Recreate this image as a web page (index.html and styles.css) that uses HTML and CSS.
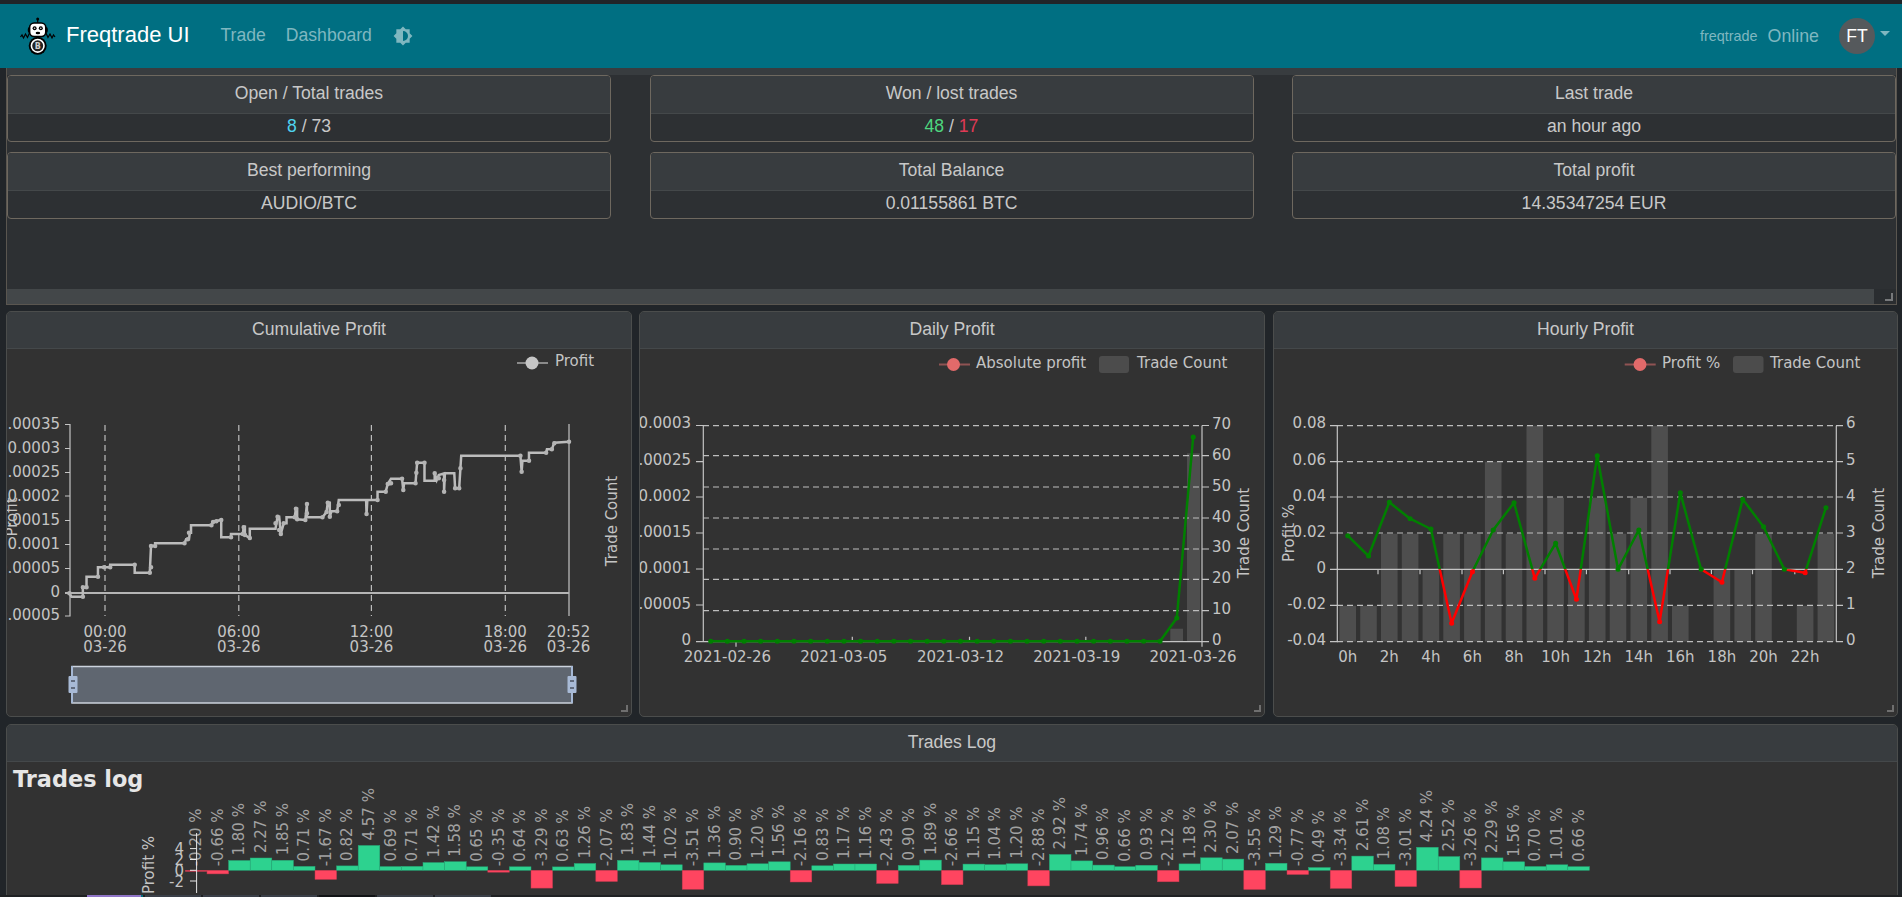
FILE: index.html
```html
<!DOCTYPE html>
<html lang="en">
<head>
<meta charset="utf-8">
<title>Freqtrade UI</title>
<link rel="stylesheet" href="styles.css">
</head>
<body>
<header class="navbar">
  <a class="brand">
    <svg class="logo" viewBox="0 0 40 40" width="40" height="40">
      <path class="logo-wire" d="M11.500 17l-2 4.500-2-3.500-2 4-1.500-3-1.500 2M28 17l2 4.500 2-3.500 2 4 1.500-3 1.500 2"/>
      <path class="logo-wire" d="M19.700 3v5"/>
      <circle class="logo-black" cx="19.700" cy="3" r="1.500"/>
      <rect class="logo-black" x="9.800" y="11" width="20" height="6" rx="2"/>
      <rect class="logo-head" x="11.600" y="7" width="16.200" height="13.500" rx="4.500"/>
      <circle class="logo-black" cx="16.600" cy="12.300" r="2"/>
      <circle class="logo-black" cx="22.800" cy="12.300" r="2"/>
      <circle class="logo-pupil" cx="16.600" cy="12.300" r=".800"/>
      <circle class="logo-pupil" cx="22.800" cy="12.300" r=".800"/>
      <ellipse class="logo-black" cx="19.900" cy="17" rx="2.300" ry="1.300"/>
      <circle class="logo-black" cx="19.700" cy="29.800" r="9"/>
      <circle class="logo-ring" cx="19.700" cy="29.800" r="6.300"/>
      <text class="logo-b" x="19.700" y="32.600">B</text>
    </svg>
    <span class="brand-name">Freqtrade UI</span>
  </a>
  <nav class="nav-links">
    <a class="nav-link">Trade</a>
    <a class="nav-link">Dashboard</a>
    <svg class="theme-icon" viewBox="0 0 24 24" width="20" height="20"><path d="M12,18V6A6,6 0 0,1 18,12A6,6 0 0,1 12,18M20,15.31L23.31,12L20,8.690V4H15.310L12,0.690L8.690,4H4V8.690L0.690,12L4,15.310V20H8.690L12,23.310L15.310,20H20V15.310Z"/></svg>
  </nav>
  <div class="nav-right">
    <span class="bot-name">freqtrade</span>
    <span class="bot-state">Online</span>
    <span class="avatar">FT</span>
    <span class="caret"></span>
  </div>
</header>

<main class="board">
  <section class="overview">
    <div class="overview-strip"></div>
    <div class="stat-grid">
      <div class="stat"><div class="stat-title">Open / Total trades</div><div class="stat-value"><span class="c-info">8</span> / 73</div></div>
      <div class="stat"><div class="stat-title">Won / lost trades</div><div class="stat-value"><span class="c-win">48</span> / <span class="c-loss">17</span></div></div>
      <div class="stat"><div class="stat-title">Last trade</div><div class="stat-value">an hour ago</div></div>
      <div class="stat"><div class="stat-title">Best performing</div><div class="stat-value">AUDIO/BTC</div></div>
      <div class="stat"><div class="stat-title">Total Balance</div><div class="stat-value">0.01155861 BTC</div></div>
      <div class="stat"><div class="stat-title">Total profit</div><div class="stat-value">14.35347254 EUR</div></div>
    </div>
    <div class="overview-band"><span class="band-handle"></span></div>
  </section>

  <section class="chart-row">
    <article class="panel">
      <h2 class="panel-title">Cumulative Profit</h2>
      <svg class="chart" viewBox="7 349 624 367" width="624" height="367">
        <line class="legend-line-grey" x1="517" y1="363" x2="548" y2="363"/>
        <circle class="legend-dot-grey" cx="532" cy="363" r="6.500"/>
        <text class="ct" x="555" y="366">Profit</text>

        <g class="dash">
          <line x1="105" y1="425" x2="105" y2="616"/>
          <line x1="238.800" y1="425" x2="238.800" y2="616"/>
          <line x1="371.400" y1="425" x2="371.400" y2="616"/>
          <line x1="505.300" y1="425" x2="505.300" y2="616"/>
        </g>
        <g class="axis">
          <path d="M65 424.500H70V616H65M65 448.500H70M65 472.500H70M65 496H70M65 520.500H70M65 544.500H70M65 568.500H70M569 424V616"/>
          <path class="axis-thick" d="M65 593H569"/>
        </g>
        <g class="ct end">
          <text x="60" y="429">0.00035</text>
          <text x="60" y="453">0.0003</text>
          <text x="60" y="477">0.00025</text>
          <text x="60" y="501">0.0002</text>
          <text x="60" y="525">0.00015</text>
          <text x="60" y="549">0.0001</text>
          <text x="60" y="573">0.00005</text>
          <text x="60" y="597">0</text>
          <text x="60" y="620">-0.00005</text>
        </g>
        <g class="ct mid">
          <text x="105" y="637">00:00</text><text x="105" y="652">03-26</text>
          <text x="238.800" y="637">06:00</text><text x="238.800" y="652">03-26</text>
          <text x="371.400" y="637">12:00</text><text x="371.400" y="652">03-26</text>
          <text x="505.300" y="637">18:00</text><text x="505.300" y="652">03-26</text>
          <text x="568.600" y="637">20:52</text><text x="568.600" y="652">03-26</text>
        </g>
        <text class="ct mid" transform="translate(17 517) rotate(-90)">Profit</text>
        <text class="ct mid" transform="translate(617 521) rotate(-90)">Trade Count</text>

        <g transform="translate(0 310) scale(.40816 .33333)">
          <path class="cum-line" d="M170 850L175 860 203 860 203 832 212 832 212 800 240 800 240 772 270 772 270 764 330 764 330 788 367 788 370 708 380 708 380 700 452 700 456 688 463 688 465 668 468 668 468 646 518 646 522 636 540 630 542 630 542 682 566 682 566 672 595 672 597 650 600 650 600 675 612 684 612 656 675 656 680 620 684 620 688 672 695 640 702 640 702 622 722 622 725 596 728 596 728 628 748 630 752 582 752 622 790 622 800 606 803 578 808 578 808 620 812 604 826 604 830 570 897 570 898 612 900 570 925 570 925 545 945 545 950 522 958 506 985 506 988 540 990 520 1018 520 1020 488 1022 458 1040 458 1040 512 1065 512 1065 490 1070 510 1075 495 1088 490 1088 545 1090 490 1113 490 1115 535 1125 535 1128 475 1130 437 1275 437 1278 485 1280 452 1296 452 1296 428 1338 428 1340 418 1352 418 1358 398 1394 395"/>
          <path class="cum-dots" d="M170 850h.1M203 860h.1M203 832h.1M212 832h.1M240 800h.1M255 772h.1M270 772h.1M330 764h.1M367 788h.1M370 772h.1M370 708h.1M380 708h.1M452 700h.1M460 688h.1M463 668h.1M518 646h.1M522 636h.1M530 634h.1M542 630h.1M566 682h.1M595 672h.1M597 652h.1M600 675h.1M612 684h.1M675 640h.1M680 620h.1M684 660h.1M688 672h.1M695 640h.1M722 622h.1M725 596h.1M728 628h.1M748 630h.1M752 582h.1M752 610h.1M790 622h.1M800 606h.1M803 578h.1M808 620h.1M826 604h.1M830 585h.1M898 612h.1M925 570h.1M945 545h.1M950 522h.1M958 520h.1M985 506h.1M988 540h.1M1018 520h.1M1020 488h.1M1022 458h.1M1040 458h.1M1065 490h.1M1075 505h.1M1088 510h.1M1088 545h.1M1115 535h.1M1125 535h.1M1128 475h.1M1275 437h.1M1278 485h.1M1296 452h.1M1338 428h.1M1352 418h.1M1358 400h.1M1394 395h.1"/>
        </g>

        <rect class="slider-body" x="72" y="666.500" width="500" height="36.500"/>
        <path class="slider-edge" d="M72 666V703M572 666V703"/>
        <rect class="slider-handle" x="68.500" y="676" width="9" height="17" rx="1"/>
        <rect class="slider-handle" x="567.500" y="676" width="9" height="17" rx="1"/>
        <path class="slider-dots" d="M71 681h4M71 688h4M570 681h4M570 688h4"/>
      </svg>
      <span class="grip"></span>
    </article>

    <article class="panel">
      <h2 class="panel-title">Daily Profit</h2>
      <svg class="chart" viewBox="640 349 624 367" width="624" height="367">
        <line class="legend-line-red" x1="939" y1="364.500" x2="970" y2="364.500"/>
        <circle class="legend-dot-red" cx="953.500" cy="364.500" r="6.500"/>
        <text class="ct" x="976" y="368">Absolute profit</text>
        <rect class="legend-bar" x="1099" y="356" width="30" height="17" rx="3"/>
        <text class="ct" x="1137" y="368">Trade Count</text>

        <rect class="bar" x="1170.300" y="628.700" width="12.700" height="13"/>
        <rect class="bar" x="1187" y="453.300" width="13" height="188.400"/>
        <g class="dash">
          <line x1="703" y1="425.700" x2="1202" y2="425.700"/>
          <line x1="703" y1="455.700" x2="1202" y2="455.700"/>
          <line x1="703" y1="487" x2="1202" y2="487"/>
          <line x1="703" y1="518" x2="1202" y2="518"/>
          <line x1="703" y1="549" x2="1202" y2="549"/>
          <line x1="703" y1="579.300" x2="1202" y2="579.300"/>
          <line x1="703" y1="610.700" x2="1202" y2="610.700"/>
        </g>
        <path class="axis-line" d="M696 425.500H703.300V641.700M696 461.700H703M696 497H703M696 533H703M696 569H703M696 605H703M696 641.700H1209M1202 425.500H1209M1202 425.500V641.700M1202 455.700H1209M1202 487H1209M1202 518H1209M1202 549H1209M1202 579.300H1209M1202 610.700H1209M736 641.700v5M852.300 641.700v-5M969.500 641.700v-5M1085.800 641.700v-5M1202 641.700v5"/>
        <g class="ct end">
          <text x="691" y="428">0.0003</text>
          <text x="691" y="465">0.00025</text>
          <text x="691" y="501">0.0002</text>
          <text x="691" y="537">0.00015</text>
          <text x="691" y="573">0.0001</text>
          <text x="691" y="609">0.00005</text>
          <text x="691" y="645">0</text>
        </g>
        <g class="ct">
          <text x="1212" y="429">70</text>
          <text x="1212" y="460">60</text>
          <text x="1212" y="491">50</text>
          <text x="1212" y="522">40</text>
          <text x="1212" y="552">30</text>
          <text x="1212" y="583">20</text>
          <text x="1212" y="614">10</text>
          <text x="1212" y="645">0</text>
        </g>
        <g class="ct mid">
          <text x="727.400" y="662">2021-02-26</text>
          <text x="843.800" y="662">2021-03-05</text>
          <text x="960.500" y="662">2021-03-12</text>
          <text x="1076.800" y="662">2021-03-19</text>
          <text x="1193" y="662">2021-03-26</text>
        </g>
        <text class="ct mid" transform="translate(1249 533) rotate(-90)">Trade Count</text>
        <polyline class="green-line" points="710.700,641.300 1160,641.300 1176.800,618 1193.200,437"/>
        <path class="green-dots" d="M710.700 641.300h.1M727.300 641.300h.1M744 641.300h.1M760.600 641.300h.1M777.300 641.300h.1M793.900 641.300h.1M810.600 641.300h.1M827.200 641.300h.1M843.900 641.300h.1M860.500 641.300h.1M877.200 641.300h.1M893.800 641.300h.1M910.500 641.300h.1M927.100 641.300h.1M943.800 641.300h.1M960.400 641.300h.1M977.100 641.300h.1M993.700 641.300h.1M1010.400 641.300h.1M1027 641.300h.1M1043.700 641.300h.1M1060.300 641.300h.1M1077 641.300h.1M1093.600 641.300h.1M1110.300 641.300h.1M1126.900 641.300h.1M1143.600 641.300h.1M1160 641.300h.1M1176.800 618h.1M1193.200 437h.1"/>
      </svg>
      <span class="grip"></span>
    </article>

    <article class="panel">
      <h2 class="panel-title">Hourly Profit</h2>
      <svg class="chart" viewBox="1274 349 623 367" width="623" height="367">
        <defs>
          <clipPath id="above-zero"><rect x="1330" y="420" width="520" height="149.300"/></clipPath>
          <clipPath id="below-zero"><rect x="1330" y="569.300" width="520" height="80"/></clipPath>
        </defs>
        <line class="legend-line-red" x1="1624.700" y1="364.500" x2="1655.700" y2="364.500"/>
        <circle class="legend-dot-red" cx="1640" cy="364.500" r="6.500"/>
        <text class="ct" x="1662" y="368">Profit %</text>
        <rect class="legend-bar" x="1733" y="356" width="30.500" height="17" rx="3"/>
        <text class="ct" x="1770" y="368">Trade Count</text>

        <g class="bar">
          <rect x="1339.400" y="605.700" width="16.600" height="36"/>
          <rect x="1360.200" y="605.700" width="16.600" height="36"/>
          <rect x="1381" y="533.700" width="16.600" height="108"/>
          <rect x="1401.800" y="533.700" width="16.600" height="108"/>
          <rect x="1422.600" y="569.700" width="16.600" height="72"/>
          <rect x="1443.300" y="533.700" width="16.600" height="108"/>
          <rect x="1464.100" y="533.700" width="16.600" height="108"/>
          <rect x="1484.900" y="461.700" width="16.600" height="180"/>
          <rect x="1505.700" y="533.700" width="16.600" height="108"/>
          <rect x="1526.500" y="425.700" width="16.600" height="216"/>
          <rect x="1547.300" y="497.700" width="16.600" height="144"/>
          <rect x="1568.100" y="569.700" width="16.600" height="72"/>
          <rect x="1588.900" y="497.700" width="16.600" height="144"/>
          <rect x="1609.700" y="533.700" width="16.600" height="108"/>
          <rect x="1630.500" y="497.700" width="16.600" height="144"/>
          <rect x="1651.300" y="425.700" width="16.600" height="216"/>
          <rect x="1672" y="605.700" width="16.600" height="36"/>
          <rect x="1713.600" y="569.700" width="16.600" height="72"/>
          <rect x="1734.400" y="569.700" width="16.600" height="72"/>
          <rect x="1755.200" y="533.700" width="16.600" height="108"/>
          <rect x="1796.800" y="605.700" width="16.600" height="36"/>
          <rect x="1817.600" y="533.700" width="16.600" height="108"/>
        </g>
        <g class="dash">
          <line x1="1337" y1="425.700" x2="1836" y2="425.700"/>
          <line x1="1337" y1="461.700" x2="1836" y2="461.700"/>
          <line x1="1337" y1="497" x2="1836" y2="497"/>
          <line x1="1337" y1="533" x2="1836" y2="533"/>
          <line x1="1337" y1="605.300" x2="1836" y2="605.300"/>
          <line x1="1337" y1="641.700" x2="1836" y2="641.700"/>
        </g>
        <path class="axis-line" d="M1330 425.700H1337.300V641.700H1330M1330 461.700H1337M1330 497H1337M1330 533H1337M1330 569.300H1843M1330 605.300H1337M1836.300 425.700V641.700M1836 425.700H1843M1836 461.700H1843M1836 497H1843M1836 533H1843M1836 605.300H1843M1836 641.700H1843M1378 569.300v5M1420 569.300v5M1462 569.300v5M1503.400 569.300v5M1545 569.300v5M1586.400 569.300v5M1628.700 569.300v5M1670 569.300v5M1711.400 569.300v5M1752.500 569.300v5M1794.800 569.300v5"/>
        <g class="ct end">
          <text x="1326" y="428">0.08</text>
          <text x="1326" y="465">0.06</text>
          <text x="1326" y="501">0.04</text>
          <text x="1326" y="537">0.02</text>
          <text x="1326" y="573">0</text>
          <text x="1326" y="609">-0.02</text>
          <text x="1326" y="645">-0.04</text>
        </g>
        <g class="ct">
          <text x="1846" y="428">6</text>
          <text x="1846" y="465">5</text>
          <text x="1846" y="501">4</text>
          <text x="1846" y="537">3</text>
          <text x="1846" y="573">2</text>
          <text x="1846" y="609">1</text>
          <text x="1846" y="645">0</text>
        </g>
        <g class="ct mid">
          <text x="1347.700" y="662">0h</text>
          <text x="1389.300" y="662">2h</text>
          <text x="1430.900" y="662">4h</text>
          <text x="1472.400" y="662">6h</text>
          <text x="1514" y="662">8h</text>
          <text x="1555.600" y="662">10h</text>
          <text x="1597.200" y="662">12h</text>
          <text x="1638.800" y="662">14h</text>
          <text x="1680.300" y="662">16h</text>
          <text x="1721.900" y="662">18h</text>
          <text x="1763.500" y="662">20h</text>
          <text x="1805.100" y="662">22h</text>
        </g>
        <text class="ct mid" transform="translate(1294 533) rotate(-90)">Profit %</text>
        <text class="ct mid" transform="translate(1884 533) rotate(-90)">Trade Count</text>
        <polyline class="green-line clip-up" points="1347.700,535.700 1368.500,556 1389.300,502.300 1410.100,518.700 1430.900,529 1451.600,623.300 1472.400,571.700 1493.200,530 1514,502.700 1534.800,578.300 1555.600,543.300 1576.400,599.300 1597.200,455.700 1618,569.300 1638.800,530 1659.600,621.700 1680.300,492.700 1701.100,569.300 1721.900,582.300 1742.700,499.300 1763.500,526.700 1784.300,569.300 1805.100,572.700 1825.900,507.700"/>
        <polyline class="red-line clip-down" points="1347.700,535.700 1368.500,556 1389.300,502.300 1410.100,518.700 1430.900,529 1451.600,623.300 1472.400,571.700 1493.200,530 1514,502.700 1534.800,578.300 1555.600,543.300 1576.400,599.300 1597.200,455.700 1618,569.300 1638.800,530 1659.600,621.700 1680.300,492.700 1701.100,569.300 1721.900,582.300 1742.700,499.300 1763.500,526.700 1784.300,569.300 1805.100,572.700 1825.900,507.700"/>
        <path class="green-dots" d="M1347.700 535.700h.1M1368.500 556h.1M1389.300 502.300h.1M1410.100 518.700h.1M1430.900 529h.1M1493.200 530h.1M1514 502.700h.1M1555.600 543.300h.1M1597.200 455.700h.1M1618 569.300h.1M1638.800 530h.1M1680.300 492.700h.1M1701.100 569.300h.1M1742.700 499.300h.1M1763.500 526.700h.1M1784.300 569.300h.1M1825.900 507.700h.1"/>
        <path class="red-dots" d="M1451.600 623.300h.1M1472.400 571.700h.1M1534.800 578.300h.1M1576.400 599.300h.1M1659.600 621.700h.1M1721.900 582.300h.1M1805.100 572.700h.1"/>
      </svg>
      <span class="grip"></span>
    </article>
  </section>

  <section class="panel trades-panel">
    <h2 class="panel-title">Trades Log</h2>
    <svg class="chart" viewBox="7 762 1889 135" width="1889" height="135">
      <text class="log-title" x="13" y="787">Trades log</text>
      <text class="ct mid" transform="translate(154 865) rotate(-90)">Profit %</text>
      <g class="tick-label">
        <text x="184" y="854">4</text>
        <text x="184" y="865">2</text>
        <text x="184" y="876">0</text>
        <text x="184" y="887">-2</text>
      </g>
      <g transform="translate(185.400 870.300)"><rect class="dn" width="21.600" height="1.100"/><text class="pct" transform="translate(15.800 -4) rotate(-90)">-0.20 %</text></g>
      <g transform="translate(207 870.300)"><rect class="dn" width="21.600" height="3.600"/><text class="pct" transform="translate(15.800 -4) rotate(-90)">-0.66 %</text></g>
      <g transform="translate(228.600 870.300)"><rect class="up" y="-9.800" width="21.600" height="9.800"/><text class="pct" transform="translate(15.800 -14.800) rotate(-90)">1.80 %</text></g>
      <g transform="translate(250.200 870.300)"><rect class="up" y="-12.300" width="21.600" height="12.300"/><text class="pct" transform="translate(15.800 -17.300) rotate(-90)">2.27 %</text></g>
      <g transform="translate(271.800 870.300)"><rect class="up" y="-10" width="21.600" height="10"/><text class="pct" transform="translate(15.800 -15) rotate(-90)">1.85 %</text></g>
      <g transform="translate(293.400 870.300)"><rect class="up" y="-3.900" width="21.600" height="3.900"/><text class="pct" transform="translate(15.800 -8.900) rotate(-90)">0.71 %</text></g>
      <g transform="translate(315 870.300)"><rect class="dn" width="21.600" height="9.100"/><text class="pct" transform="translate(15.800 -4) rotate(-90)">-1.67 %</text></g>
      <g transform="translate(336.600 870.300)"><rect class="up" y="-4.400" width="21.600" height="4.400"/><text class="pct" transform="translate(15.800 -9.400) rotate(-90)">0.82 %</text></g>
      <g transform="translate(358.200 870.300)"><rect class="up" y="-24.800" width="21.600" height="24.800"/><text class="pct" transform="translate(15.800 -29.800) rotate(-90)">4.57 %</text></g>
      <g transform="translate(379.800 870.300)"><rect class="up" y="-3.700" width="21.600" height="3.700"/><text class="pct" transform="translate(15.800 -8.700) rotate(-90)">0.69 %</text></g>
      <g transform="translate(401.400 870.300)"><rect class="up" y="-3.900" width="21.600" height="3.900"/><text class="pct" transform="translate(15.800 -8.900) rotate(-90)">0.71 %</text></g>
      <g transform="translate(423 870.300)"><rect class="up" y="-7.700" width="21.600" height="7.700"/><text class="pct" transform="translate(15.800 -12.700) rotate(-90)">1.42 %</text></g>
      <g transform="translate(444.600 870.300)"><rect class="up" y="-8.600" width="21.600" height="8.600"/><text class="pct" transform="translate(15.800 -13.600) rotate(-90)">1.58 %</text></g>
      <g transform="translate(466.200 870.300)"><rect class="up" y="-3.500" width="21.600" height="3.500"/><text class="pct" transform="translate(15.800 -8.500) rotate(-90)">0.65 %</text></g>
      <g transform="translate(487.800 870.300)"><rect class="dn" width="21.600" height="1.900"/><text class="pct" transform="translate(15.800 -4) rotate(-90)">-0.35 %</text></g>
      <g transform="translate(509.400 870.300)"><rect class="up" y="-3.500" width="21.600" height="3.500"/><text class="pct" transform="translate(15.800 -8.500) rotate(-90)">0.64 %</text></g>
      <g transform="translate(531 870.300)"><rect class="dn" width="21.600" height="17.800"/><text class="pct" transform="translate(15.800 -4) rotate(-90)">-3.29 %</text></g>
      <g transform="translate(552.600 870.300)"><rect class="up" y="-3.400" width="21.600" height="3.400"/><text class="pct" transform="translate(15.800 -8.400) rotate(-90)">0.63 %</text></g>
      <g transform="translate(574.200 870.300)"><rect class="up" y="-6.800" width="21.600" height="6.800"/><text class="pct" transform="translate(15.800 -11.800) rotate(-90)">1.26 %</text></g>
      <g transform="translate(595.800 870.300)"><rect class="dn" width="21.600" height="11.200"/><text class="pct" transform="translate(15.800 -4) rotate(-90)">-2.07 %</text></g>
      <g transform="translate(617.400 870.300)"><rect class="up" y="-9.900" width="21.600" height="9.900"/><text class="pct" transform="translate(15.800 -14.900) rotate(-90)">1.83 %</text></g>
      <g transform="translate(639 870.300)"><rect class="up" y="-7.800" width="21.600" height="7.800"/><text class="pct" transform="translate(15.800 -12.800) rotate(-90)">1.44 %</text></g>
      <g transform="translate(660.600 870.300)"><rect class="up" y="-5.500" width="21.600" height="5.500"/><text class="pct" transform="translate(15.800 -10.500) rotate(-90)">1.02 %</text></g>
      <g transform="translate(682.200 870.300)"><rect class="dn" width="21.600" height="19"/><text class="pct" transform="translate(15.800 -4) rotate(-90)">-3.51 %</text></g>
      <g transform="translate(703.800 870.300)"><rect class="up" y="-7.400" width="21.600" height="7.400"/><text class="pct" transform="translate(15.800 -12.400) rotate(-90)">1.36 %</text></g>
      <g transform="translate(725.400 870.300)"><rect class="up" y="-4.900" width="21.600" height="4.900"/><text class="pct" transform="translate(15.800 -9.900) rotate(-90)">0.90 %</text></g>
      <g transform="translate(747 870.300)"><rect class="up" y="-6.500" width="21.600" height="6.500"/><text class="pct" transform="translate(15.800 -11.500) rotate(-90)">1.20 %</text></g>
      <g transform="translate(768.600 870.300)"><rect class="up" y="-8.500" width="21.600" height="8.500"/><text class="pct" transform="translate(15.800 -13.500) rotate(-90)">1.56 %</text></g>
      <g transform="translate(790.200 870.300)"><rect class="dn" width="21.600" height="11.700"/><text class="pct" transform="translate(15.800 -4) rotate(-90)">-2.16 %</text></g>
      <g transform="translate(811.800 870.300)"><rect class="up" y="-4.500" width="21.600" height="4.500"/><text class="pct" transform="translate(15.800 -9.500) rotate(-90)">0.83 %</text></g>
      <g transform="translate(833.400 870.300)"><rect class="up" y="-6.300" width="21.600" height="6.300"/><text class="pct" transform="translate(15.800 -11.300) rotate(-90)">1.17 %</text></g>
      <g transform="translate(855 870.300)"><rect class="up" y="-6.300" width="21.600" height="6.300"/><text class="pct" transform="translate(15.800 -11.300) rotate(-90)">1.16 %</text></g>
      <g transform="translate(876.600 870.300)"><rect class="dn" width="21.600" height="13.200"/><text class="pct" transform="translate(15.800 -4) rotate(-90)">-2.43 %</text></g>
      <g transform="translate(898.200 870.300)"><rect class="up" y="-4.900" width="21.600" height="4.900"/><text class="pct" transform="translate(15.800 -9.900) rotate(-90)">0.90 %</text></g>
      <g transform="translate(919.800 870.300)"><rect class="up" y="-10.200" width="21.600" height="10.200"/><text class="pct" transform="translate(15.800 -15.200) rotate(-90)">1.89 %</text></g>
      <g transform="translate(941.400 870.300)"><rect class="dn" width="21.600" height="14.400"/><text class="pct" transform="translate(15.800 -4) rotate(-90)">-2.66 %</text></g>
      <g transform="translate(963 870.300)"><rect class="up" y="-6.200" width="21.600" height="6.200"/><text class="pct" transform="translate(15.800 -11.200) rotate(-90)">1.15 %</text></g>
      <g transform="translate(984.600 870.300)"><rect class="up" y="-5.600" width="21.600" height="5.600"/><text class="pct" transform="translate(15.800 -10.600) rotate(-90)">1.04 %</text></g>
      <g transform="translate(1006.200 870.300)"><rect class="up" y="-6.500" width="21.600" height="6.500"/><text class="pct" transform="translate(15.800 -11.500) rotate(-90)">1.20 %</text></g>
      <g transform="translate(1027.800 870.300)"><rect class="dn" width="21.600" height="15.600"/><text class="pct" transform="translate(15.800 -4) rotate(-90)">-2.88 %</text></g>
      <g transform="translate(1049.400 870.300)"><rect class="up" y="-15.800" width="21.600" height="15.800"/><text class="pct" transform="translate(15.800 -20.800) rotate(-90)">2.92 %</text></g>
      <g transform="translate(1071 870.300)"><rect class="up" y="-9.400" width="21.600" height="9.400"/><text class="pct" transform="translate(15.800 -14.400) rotate(-90)">1.74 %</text></g>
      <g transform="translate(1092.600 870.300)"><rect class="up" y="-5.200" width="21.600" height="5.200"/><text class="pct" transform="translate(15.800 -10.200) rotate(-90)">0.96 %</text></g>
      <g transform="translate(1114.200 870.300)"><rect class="up" y="-3.600" width="21.600" height="3.600"/><text class="pct" transform="translate(15.800 -8.600) rotate(-90)">0.66 %</text></g>
      <g transform="translate(1135.800 870.300)"><rect class="up" y="-5" width="21.600" height="5"/><text class="pct" transform="translate(15.800 -10) rotate(-90)">0.93 %</text></g>
      <g transform="translate(1157.400 870.300)"><rect class="dn" width="21.600" height="11.500"/><text class="pct" transform="translate(15.800 -4) rotate(-90)">-2.12 %</text></g>
      <g transform="translate(1179 870.300)"><rect class="up" y="-6.400" width="21.600" height="6.400"/><text class="pct" transform="translate(15.800 -11.400) rotate(-90)">1.18 %</text></g>
      <g transform="translate(1200.600 870.300)"><rect class="up" y="-12.500" width="21.600" height="12.500"/><text class="pct" transform="translate(15.800 -17.500) rotate(-90)">2.30 %</text></g>
      <g transform="translate(1222.200 870.300)"><rect class="up" y="-11.200" width="21.600" height="11.200"/><text class="pct" transform="translate(15.800 -16.200) rotate(-90)">2.07 %</text></g>
      <g transform="translate(1243.800 870.300)"><rect class="dn" width="21.600" height="19.200"/><text class="pct" transform="translate(15.800 -4) rotate(-90)">-3.55 %</text></g>
      <g transform="translate(1265.400 870.300)"><rect class="up" y="-7" width="21.600" height="7"/><text class="pct" transform="translate(15.800 -12) rotate(-90)">1.29 %</text></g>
      <g transform="translate(1287 870.300)"><rect class="dn" width="21.600" height="4.200"/><text class="pct" transform="translate(15.800 -4) rotate(-90)">-0.77 %</text></g>
      <g transform="translate(1308.600 870.300)"><rect class="up" y="-2.700" width="21.600" height="2.700"/><text class="pct" transform="translate(15.800 -7.700) rotate(-90)">0.49 %</text></g>
      <g transform="translate(1330.200 870.300)"><rect class="dn" width="21.600" height="18.100"/><text class="pct" transform="translate(15.800 -4) rotate(-90)">-3.34 %</text></g>
      <g transform="translate(1351.800 870.300)"><rect class="up" y="-14.200" width="21.600" height="14.200"/><text class="pct" transform="translate(15.800 -19.200) rotate(-90)">2.61 %</text></g>
      <g transform="translate(1373.400 870.300)"><rect class="up" y="-5.900" width="21.600" height="5.900"/><text class="pct" transform="translate(15.800 -10.900) rotate(-90)">1.08 %</text></g>
      <g transform="translate(1395 870.300)"><rect class="dn" width="21.600" height="16.300"/><text class="pct" transform="translate(15.800 -4) rotate(-90)">-3.01 %</text></g>
      <g transform="translate(1416.600 870.300)"><rect class="up" y="-23" width="21.600" height="23"/><text class="pct" transform="translate(15.800 -28) rotate(-90)">4.24 %</text></g>
      <g transform="translate(1438.200 870.300)"><rect class="up" y="-13.700" width="21.600" height="13.700"/><text class="pct" transform="translate(15.800 -18.700) rotate(-90)">2.52 %</text></g>
      <g transform="translate(1459.800 870.300)"><rect class="dn" width="21.600" height="17.700"/><text class="pct" transform="translate(15.800 -4) rotate(-90)">-3.26 %</text></g>
      <g transform="translate(1481.400 870.300)"><rect class="up" y="-12.400" width="21.600" height="12.400"/><text class="pct" transform="translate(15.800 -17.400) rotate(-90)">2.29 %</text></g>
      <g transform="translate(1503 870.300)"><rect class="up" y="-8.500" width="21.600" height="8.500"/><text class="pct" transform="translate(15.800 -13.500) rotate(-90)">1.56 %</text></g>
      <g transform="translate(1524.600 870.300)"><rect class="up" y="-3.800" width="21.600" height="3.800"/><text class="pct" transform="translate(15.800 -8.800) rotate(-90)">0.70 %</text></g>
      <g transform="translate(1546.200 870.300)"><rect class="up" y="-5.500" width="21.600" height="5.500"/><text class="pct" transform="translate(15.800 -10.500) rotate(-90)">1.01 %</text></g>
      <g transform="translate(1567.800 870.300)"><rect class="up" y="-3.600" width="21.600" height="3.600"/><text class="pct" transform="translate(15.800 -8.600) rotate(-90)">0.66 %</text></g>
      <path class="log-axis" d="M196.600 833V893M190 848.600H196.600M190 859.500H196.600M190 870.300H196.600M190 881H196.600"/>
    </svg>
  </section>
</main>

<div class="tab-strip">
  <span class="tab tab-purple"></span>
  <span class="tab tab-teal"></span>
  <span class="tab"></span>
  <span class="tab"></span>
  <span class="tab"></span>
  <span class="tab tab-dark"></span>
  <span class="tab"></span>
  <span class="tab"></span>
</div>
</body>
</html>
```

FILE: styles.css
```css
* { box-sizing: border-box; }

html, body { height: 100%; }

body {
  margin: 0;
  padding-top: 4px;
  height: 100vh;
  overflow: hidden;
  background: #212529;
  color: #c8c8c8;
  font-family: "Liberation Sans", Arial, sans-serif;
  font-size: 17.6px;
  line-height: 1.5;
}

/* navbar */
.navbar {
  display: flex;
  align-items: center;
  height: 64px;
  padding: 0 12px 0 18px;
  background: #006f82;
}
.brand { display: flex; align-items: center; }
.logo { display: block; }
.logo-wire { fill: none; stroke: #000; stroke-width: 1.2; }
.logo-black { fill: #000; }
.logo-pupil { fill: #ddd; }
.logo-head { fill: #fff; stroke: #000; stroke-width: 1.6; }
.logo-ring { fill: #222; stroke: #fff; stroke-width: 1.6; }
.logo-b { fill: #ccc; font: 700 8px "DejaVu Sans", sans-serif; text-anchor: middle; }
.brand-name {
  margin-left: 8px;
  margin-top: -4px;
  color: #fff;
  font-size: 22px;
}
.nav-links {
  display: flex;
  align-items: center;
  margin-left: 31px;
  margin-top: -1px;
}
.nav-link { margin-right: 20px; color: #7fb7c0; }
.theme-icon { display: block; margin-top: 2px; margin-left: 1px; fill: #7fb7c0; }
.nav-right {
  display: flex;
  align-items: center;
  margin-left: auto;
}
.bot-name { color: #7fb7c0; font-size: 14.4px; margin-top: 2px; }
.bot-state { margin-left: 10px; margin-top: 0; color: #7fb7c0; font-size: 17.8px; }
.avatar {
  display: flex;
  align-items: center;
  justify-content: center;
  width: 36px;
  height: 36px;
  margin-left: 20px;
  border-radius: 50%;
  background: #55595c;
  color: #fff;
}
.caret {
  width: 0;
  height: 0;
  margin-left: 5px;
  margin-top: -6px;
  border-top: 5px solid #7fb7c0;
  border-left: 5px solid transparent;
  border-right: 5px solid transparent;
}

/* page */
.board {
  display: flex;
  flex-direction: column;
  gap: 7px;
  padding: 0 4px 0 6px;
}

/* overview */
.overview {
  display: flex;
  flex-direction: column;
  width: 1891px;
  height: 237px;
  background: #2d3033;
  border: 1px solid #5a5650;
  border-top: 0;
}
.overview-strip { height: 7px; background: #383c3f; }
.stat-grid {
  flex: 1;
  display: grid;
  grid-template-columns: repeat(3, 604px);
  grid-auto-rows: 67px;
  column-gap: 38.5px;
  row-gap: 10px;
  align-content: start;
}
.stat {
  border: 1px solid #6e685f;
  border-radius: 4px;
  text-align: center;
  overflow: hidden;
}
.stat-title {
  height: 38px;
  line-height: 35px;
  background: #383c3f;
  border-bottom: 1px solid #44484a;
}
.stat-value { line-height: 24px; }
.c-info { color: #4fd3ef; }
.c-win { color: #4ed77f; }
.c-loss { color: #e03a55; }
.overview-band {
  display: flex;
  justify-content: flex-end;
  height: 15px;
  background: #434749;
}
.band-handle {
  position: relative;
  width: 22px;
  background: #2a2d30;
}
.band-handle::after {
  content: "";
  position: absolute;
  right: 3px;
  bottom: 3px;
  width: 6px;
  height: 6px;
  border-right: 2px solid #77797b;
  border-bottom: 2px solid #77797b;
}

/* panels */
.chart-row {
  display: grid;
  grid-template-columns: repeat(3, 626px);
  column-gap: 7px;
  margin-top: -1px;
}
.chart-row .panel:last-child { margin-left: 1px; }
.panel {
  position: relative;
  height: 406px;
  background: #323232;
  border: 1px solid #4b4d4c;
  border-radius: 5px;
  overflow: hidden;
}
.panel-title {
  margin: 0;
  height: 37px;
  line-height: 35px;
  background: #383c3f;
  border-bottom: 1px solid #44484a;
  font-size: 17.6px;
  font-weight: 400;
  text-align: center;
}
.chart { display: block; overflow: hidden; }
.grip {
  position: absolute;
  right: 3px;
  bottom: 4px;
  width: 7px;
  height: 7px;
  border-right: 2px solid #6f6f6f;
  border-bottom: 2px solid #6f6f6f;
}
.trades-panel { width: 1892px; height: 200px; }

/* chart parts */
.ct { font: 15px "DejaVu Sans", sans-serif; fill: #c4c4c4; }
.end { text-anchor: end; }
.mid { text-anchor: middle; }
.dash line { stroke: #bdbdbd; stroke-width: 1.200; stroke-dasharray: 6 4; }
.axis path, .axis-line { fill: none; stroke: #c4c4c4; stroke-width: 1.200; }
.axis .axis-thick { stroke: #b5b5b5; stroke-width: 2; }
.bar { fill: #4e4e4e; }
.legend-line-grey { stroke: #8a8a8a; stroke-width: 2; }
.legend-dot-grey { fill: #c6c6c6; }
.legend-line-red { stroke: #8f5353; stroke-width: 2; }
.legend-dot-red { fill: #e26a6a; }
.legend-bar { fill: #4c4c4c; }
.cum-line {
  fill: none;
  stroke: #bcbcbc;
  stroke-width: 2.500;
  vector-effect: non-scaling-stroke;
}
.cum-dots {
  fill: none;
  stroke: #b4b4b4;
  stroke-width: 4.500;
  stroke-linecap: round;
  vector-effect: non-scaling-stroke;
}
.slider-body { fill: #5f6670; stroke: #ccd3dd; stroke-width: 1.500; }
.slider-edge { stroke: #a5b8d5; stroke-width: 2; }
.slider-handle { fill: #a8bad6; }
.slider-dots { stroke: #4a5260; stroke-width: 1.500; }
.green-line, .red-line { fill: none; stroke-width: 2.500; stroke-linejoin: round; }
.green-line { stroke: #008000; }
.red-line { stroke: #ff0000; }
.clip-up { clip-path: url(#above-zero); }
.clip-down { clip-path: url(#below-zero); }
.green-dots, .red-dots { fill: none; stroke-width: 5; stroke-linecap: round; }
.green-dots { stroke: #008000; }
.red-dots { stroke: #ff0000; }

/* trades log */
.log-title { font: 700 22.4px "DejaVu Sans", sans-serif; fill: #e6e6e6; }
.tick-label text { font: 15px "DejaVu Sans", sans-serif; fill: #c4c4c4; text-anchor: end; }
.up { fill: #2dd28f; stroke: #27a878; stroke-width: .500; }
.dn { fill: #ff4560; stroke: #c23a4e; stroke-width: .500; }
.pct { font: 15px "DejaVu Sans", sans-serif; fill: #a2a2a2; }
.log-axis { fill: none; stroke: #e6e6e6; stroke-width: 1; }

/* bottom strip */
.tab-strip {
  position: fixed;
  left: 0;
  right: 0;
  bottom: 0;
  display: flex;
  gap: 2px;
  height: 2px;
  padding-left: 87px;
  background: #1f2123;
}
.tab { width: 56px; background: #3a3f48; }
.tab-purple { width: 54px; margin-right: -2px; background: #9075c8; }
.tab-teal { width: 2px; background: #00707f; }
.tab-dark { background: #111316; }
```
